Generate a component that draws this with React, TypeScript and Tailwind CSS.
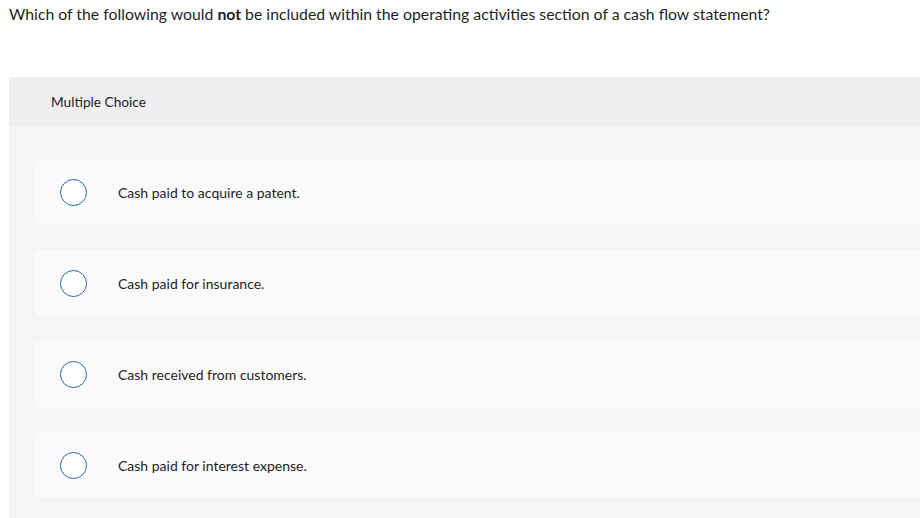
const options = [
  'Cash paid to acquire a patent.',
  'Cash paid for insurance.',
  'Cash received from customers.',
  'Cash paid for interest expense.',
];

export default function App() {
  return (
    <div
      className="w-[920px] h-[518px] overflow-hidden bg-white text-[#1f1f1f]"
      style={{ fontFamily: 'Lato, "Open Sans", sans-serif' }}
    >
      <p className="pl-[9px] pt-[4px] text-[15.8px] leading-[20px]">
        Which of the following would <b className="font-bold">not</b> be included within the operating
        activities section of a cash flow statement?
      </p>

      <div className="ml-[9px] mt-[53px] rounded-tl-[2px] bg-[#f5f5f5] pb-[20px]">
        <div className="flex h-[49px] items-center bg-[#efefef] pl-[42px] pt-[1px] text-[13.7px]">Multiple Choice</div>

        <div className="flex flex-col gap-[25px] pl-[26px] pt-[33px]">
          {options.map(o => (
            <div key={o} className="flex h-[66px] items-center rounded-l-[3px] bg-[#fafafa] pl-[25px]">
              <span className="h-[27px] w-[27px] shrink-0 rounded-full border-[1.5px] border-[#2a65a0] bg-white" />
              <span className="ml-[31px] text-[14px]">{o}</span>
            </div>
          ))}
        </div>
      </div>
    </div>
  );
}
